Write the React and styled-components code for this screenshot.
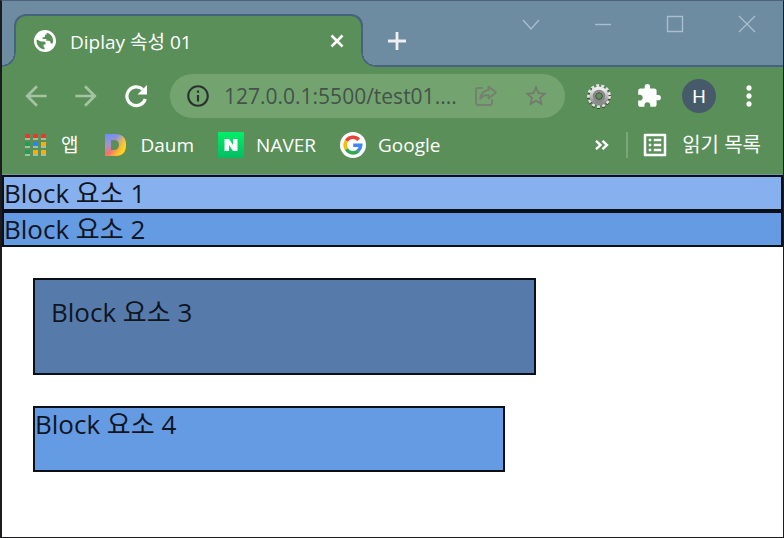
import React from 'react';
import styled, { createGlobalStyle } from 'styled-components';
import {
  MdArrowBack,
  MdArrowForward,
  MdExtension,
  MdInfoOutline,
  MdMoreVert,
  MdOutlineListAlt,
  MdStarBorder,
} from 'react-icons/md';

const GlobalStyle = createGlobalStyle`
  *, *::before, *::after {
    box-sizing: border-box;
  }

  body {
    margin: 0;
    background-color: #fff;
    font-family: 'Open Sans', 'Noto Sans CJK KR', sans-serif;
  }

  button, input {
    margin: 0;
    padding: 0;
    border: 0;
    background: none;
    font: inherit;
    color: inherit;
  }

  svg {
    display: block;
    flex: none;
  }
`;

const BrowserWindow = styled.div`
  min-height: 100vh;
  display: flex;
  flex-direction: column;
  border: 1px solid #1c1c1f;
  border-top-color: #4c6276;
  border-left-width: 2px;
`;

const TabStrip = styled.header`
  height: 66px;
  display: flex;
  align-items: stretch;
  background-color: #6d8ba1;
  box-shadow: inset 0 -2px 0 #46627c;
`;

const Tab = styled.div`
  position: relative;
  flex: 0 1 349px;
  min-width: 0;
  margin: 13px 0 0 12px;
  padding: 0 12px 2px 18px;
  display: flex;
  align-items: center;
  gap: 14px;
  color: #fff;
  font-size: 19px;
  background-color: #5a8f59;
  border: 2px solid #46627c;
  border-bottom: 0;
  border-radius: 12px 12px 0 0;

  /* rounded feet of the tab */
  &::before,
  &::after {
    content: '';
    position: absolute;
    bottom: 0;
    width: 14px;
    height: 14px;
  }

  &::before {
    left: -14px;
    background: radial-gradient(circle at 0 0, #6d8ba1 12px, #46627c 12px, #46627c 13px, #5a8f59 14px);
  }

  &::after {
    right: -14px;
    background: radial-gradient(circle at 100% 0, #6d8ba1 12px, #46627c 12px, #46627c 13px, #5a8f59 14px);
  }
`;

const TabTitle = styled.span`
  flex: 1;
  min-width: 0;
  overflow: hidden;
  white-space: nowrap;
`;

const TabButton = styled.button`
  width: 24px;
  height: 24px;
  display: grid;
  place-items: center;
  color: #fff;
`;

const NewTabButton = styled(TabButton)`
  width: 36px;
  height: 36px;
  margin: 22px 0 0 16px;
  color: #f0f0f0;
`;

const WindowControls = styled.div`
  margin-left: auto;
  display: flex;
  color: #a9bdcd;
`;

const ControlButton = styled.button`
  width: 72px;
  height: 46px;
  display: grid;
  place-items: center;
`;

const Toolbar = styled.nav`
  background-color: #5a8f59;
  color: #fff;
  border-bottom: 1px solid #7793a4;
`;

const NavRow = styled.div`
  height: 58px;
  padding: 0 9px;
  display: flex;
  align-items: center;
`;

const IconButton = styled.button`
  width: 50px;
  height: 44px;
  flex: none;
  display: grid;
  place-items: center;
  color: ${({ $color }) => $color || '#fff'};
`;

const AddressBar = styled.form`
  flex: 1;
  min-width: 0;
  height: 44px;
  margin: 0 9px;
  padding: 0 4px 0 15px;
  display: flex;
  align-items: center;
  background-color: #73a470;
  border-radius: 22px;
  color: #29332d;
`;

const AddressInput = styled.input`
  flex: 1;
  min-width: 0;
  margin-left: 13px;
  font-size: 21px;
  color: #44524a;
  outline: none;
`;

const Avatar = styled.span`
  width: 34px;
  height: 34px;
  display: grid;
  place-items: center;
  border-radius: 50%;
  background-color: #465a69;
  font-family: Roboto, sans-serif;
  font-size: 19px;
`;

const BookmarkRow = styled.div`
  height: 49px;
  padding: 0 22px 9px 21px;
  display: flex;
  align-items: center;
  gap: 24px;
`;

const Bookmark = styled.a`
  display: flex;
  align-items: center;
  gap: 12px;
  color: #fff;
  font-size: 19px;
  line-height: 26px;
  text-decoration: none;
  white-space: nowrap;
`;

const ReadingList = styled(Bookmark)`
  font-size: 20px;
`;

const BookmarkEnd = styled.div`
  margin-left: auto;
  display: flex;
  align-items: center;
  gap: 12px;
`;

const Divider = styled.span`
  width: 2px;
  height: 26px;
  background-color: #7ba67a;
`;

const Page = styled.main`
  flex: 1;
  background-color: #fff;
`;

const Block = styled.div`
  min-height: 36px;
  border: 2px solid #0b0f18;
  background-color: ${({ $color }) => $color};
  font-size: 26px;
  line-height: 32px;
  color: #10151f;
`;

const SizedBlock = styled(Block)`
  width: ${({ $width }) => $width}px;
  max-width: calc(100% - 62px);
  height: ${({ $height }) => $height}px;
  margin: 31px;
  padding: ${({ $padding }) => $padding || 0}px;
`;

const GlobeIcon = () => (
  <svg width="22" height="22" viewBox="0 0 22 22">
    <circle cx="11" cy="11" r="11" fill="#fff" />
    <path
      d="M2.6 9.4 L7 11.6 H10 Q11.6 11.6 11.6 13.2 V14.4 H9.6 V16.4 Q9.6 17.4 10.6 17.6 V19.4 Q5.6 19 3.4 14.8 Q2.2 12 2.6 9.4Z M12.6 2.7 Q16.4 3.4 18.4 7.2 Q19.8 10.6 18.6 13.6 H16.6 V12.4 Q16.4 10.8 14.8 10.8 H12.4 V9 H8.6 V7.2 H10 Q11 7.2 11 6.2 V4.8 H12.6Z"
      fill="#5a8f59"
    />
  </svg>
);

const ReloadIcon = () => (
  <svg width="24" height="24" viewBox="0 0 24 24">
    <path d="M21.3 15 A9.4 9.4 0 1 1 18.8 5.4" fill="none" stroke="currentColor" strokeWidth="3.2" />
    <path d="M23 1 V10.5 H13.5 Z" fill="currentColor" />
  </svg>
);

const ShareIcon = () => (
  <svg width="24" height="24" viewBox="0 0 24 24" fill="none" stroke="currentColor" strokeWidth="2">
    <path d="M8 4 H4 Q2 4 2 6 V19 Q2 21 4 21 H16 Q18 21 18 19 V16" strokeLinecap="round" />
    <path d="M14.5 2.5 L22 8.5 L14.5 14.5 V11 Q9 10.8 6.3 14.8 Q7 7 14.5 6 Z" strokeLinejoin="round" />
  </svg>
);

const GearIcon = () => (
  <svg width="26" height="26" viewBox="0 0 26 26">
    <defs>
      <linearGradient id="gear" x1="0" y1="0" x2="0" y2="1">
        <stop offset="0" stopColor="#ececec" />
        <stop offset="1" stopColor="#8b8b8b" />
      </linearGradient>
    </defs>
    <circle cx="13" cy="14" r="10.4" fill="none" stroke="#33402f" strokeWidth="3" strokeDasharray="2.9 2.2" />
    <circle cx="13" cy="13" r="10.4" fill="none" stroke="#e4e4e4" strokeWidth="3" strokeDasharray="2.9 2.2" />
    <circle cx="13" cy="13" r="6.4" fill="none" stroke="url(#gear)" strokeWidth="6.4" />
    <circle cx="13" cy="13" r="5.2" fill="none" stroke="#858585" strokeWidth="2" />
    <circle cx="13" cy="13" r="3.4" fill="#5a8f59" stroke="#444" strokeWidth="1" />
  </svg>
);

const appDots = [
  ['#f0352d', '#f0352d', '#f0352d'],
  ['#1e9e58', '#2286f5', '#fbac0c'],
  ['#1e9e58', '#fbac0c', '#fbac0c'],
];

const AppsIcon = () => (
  <svg width="26" height="26" viewBox="0 0 26 26">
    {appDots.map((row, y) =>
      row.map((color, x) => (
        <g key={`${x}-${y}`}>
          <rect x={2 + x * 8} y={2 + y * 8} width="5" height="4" fill={color} />
          <rect x={2 + x * 8} y={6 + y * 8} width="5" height="2" fill="#a3bf9f" />
        </g>
      ))
    )}
  </svg>
);

const DaumIcon = () => (
  <svg width="26" height="26" viewBox="0 0 26 26">
    <defs>
      <linearGradient id="daum" x1="0.2" y1="0" x2="0.5" y2="1">
        <stop offset="0" stopColor="#6f8ffb" />
        <stop offset="0.45" stopColor="#a693c9" />
        <stop offset="0.8" stopColor="#f8706a" />
        <stop offset="1" stopColor="#ff8a50" />
      </linearGradient>
      <linearGradient id="daumSide" x1="0" y1="0" x2="1" y2="0.5">
        <stop offset="0.5" stopColor="#ffd21f" stopOpacity="0" />
        <stop offset="0.95" stopColor="#ffd21f" />
      </linearGradient>
    </defs>
    <path d="M3 2 H13 Q24 2 24 13 Q24 24 13 24 H3 Z M9 8 V18 H12 Q17 18 17 13 Q17 8 12 8 Z" fill="url(#daum)" fillRule="evenodd" />
    <path d="M3 2 H13 Q24 2 24 13 Q24 24 13 24 H3 Z M9 8 V18 H12 Q17 18 17 13 Q17 8 12 8 Z" fill="url(#daumSide)" fillRule="evenodd" />
  </svg>
);

const NaverIcon = () => (
  <svg width="26" height="26" viewBox="0 0 26 26">
    <defs>
      <linearGradient id="naver" x1="0" y1="0" x2="0" y2="1">
        <stop offset="0" stopColor="#02ef69" />
        <stop offset="1" stopColor="#04bd63" />
      </linearGradient>
    </defs>
    <rect width="26" height="26" fill="url(#naver)" />
    <path d="M6.5 7 H11 L15 13 V7 H19.5 V19 H15 L11 13 V19 H6.5 Z" fill="#fff" />
  </svg>
);

const GoogleIcon = () => (
  <svg width="26" height="26" viewBox="0 0 26 26">
    <circle cx="13" cy="13" r="13" fill="#fff" />
    <g fill="none" strokeWidth="3.6">
      <path d="M6.4 8.9 A7.7 7.7 0 0 1 18.7 7.8" stroke="#ea4335" />
      <path d="M6.4 17.1 A7.7 7.7 0 0 1 6.4 8.9" stroke="#fbbc05" />
      <path d="M18.2 18.8 A7.7 7.7 0 0 1 6.4 17.1" stroke="#34a853" />
      <path d="M13.2 13.2 H20.7 Q20.5 16.8 18 18.9" stroke="#4285f4" />
    </g>
  </svg>
);

const bookmarks = [
  { name: '앱', icon: <AppsIcon /> },
  { name: 'Daum', icon: <DaumIcon /> },
  { name: 'NAVER', icon: <NaverIcon /> },
  { name: 'Google', icon: <GoogleIcon /> },
];

const windowControls = [
  { name: 'Search tabs', path: 'M0 4 L8 13 L16 4' },
  { name: 'Minimize', path: 'M0 8.5 H16' },
  { name: 'Maximize', path: 'M.5 .5 H15.5 V15.5 H.5 Z' },
  { name: 'Close', path: 'M0 0 L16 16 M16 0 L0 16' },
];

const Tabs = () => (
  <TabStrip>
    <Tab>
      <GlobeIcon />
      <TabTitle>Diplay 속성 01</TabTitle>
      <TabButton type="button" aria-label="Close tab">
        <svg width="14" height="14" viewBox="0 0 14 14" stroke="currentColor" strokeWidth="2.6">
          <path d="M1.5 1.5 L12.5 12.5 M12.5 1.5 L1.5 12.5" />
        </svg>
      </TabButton>
    </Tab>
    <NewTabButton type="button" aria-label="New tab">
      <svg width="20" height="20" viewBox="0 0 20 20" stroke="currentColor" strokeWidth="2.8">
        <path d="M10 1 V19 M1 10 H19" />
      </svg>
    </NewTabButton>
    <WindowControls>
      {windowControls.map(({ name, path }) => (
        <ControlButton key={name} type="button" aria-label={name}>
          <svg width="16" height="16" viewBox="0 0 16 16" fill="none" stroke="currentColor" strokeWidth="1.4" overflow="visible">
            <path d={path} />
          </svg>
        </ControlButton>
      ))}
    </WindowControls>
  </TabStrip>
);

const Navigation = () => (
  <NavRow>
    <IconButton type="button" aria-label="Back" $color="#a5c3a3">
      <MdArrowBack size={32} />
    </IconButton>
    <IconButton type="button" aria-label="Forward" $color="#a5c3a3">
      <MdArrowForward size={32} />
    </IconButton>
    <IconButton type="button" aria-label="Reload">
      <ReloadIcon />
    </IconButton>
    <AddressBar>
      <MdInfoOutline size={26} />
      <AddressInput aria-label="Address" defaultValue="127.0.0.1:5500/test01...." />
      <IconButton type="button" aria-label="Share" $color="#75806f">
        <ShareIcon />
      </IconButton>
      <IconButton type="button" aria-label="Bookmark this page" $color="#75786f">
        <MdStarBorder size={26} />
      </IconButton>
    </AddressBar>
    <IconButton type="button" aria-label="Settings">
      <GearIcon />
    </IconButton>
    <IconButton type="button" aria-label="Extensions">
      <MdExtension size={26} />
    </IconButton>
    <IconButton type="button" aria-label="Profile">
      <Avatar>H</Avatar>
    </IconButton>
    <IconButton type="button" aria-label="Menu">
      <MdMoreVert size={32} />
    </IconButton>
  </NavRow>
);

const Bookmarks = () => (
  <BookmarkRow>
    {bookmarks.map(({ name, icon }) => (
      <Bookmark key={name} href="#">
        {icon}
        {name}
      </Bookmark>
    ))}
    <BookmarkEnd>
      <TabButton type="button" aria-label="More bookmarks">
        <svg width="14" height="10" viewBox="0 0 14 10" fill="none" stroke="currentColor" strokeWidth="2.4">
          <path d="M1 .8 L5.5 5 L1 9.2 M7.5 .8 L12 5 L7.5 9.2" />
        </svg>
      </TabButton>
      <Divider />
      <ReadingList href="#">
        <MdOutlineListAlt size={30} />
        읽기 목록
      </ReadingList>
    </BookmarkEnd>
  </BookmarkRow>
);

const App = () => {
  return (
    <>
      <GlobalStyle />
      <BrowserWindow>
        <Tabs />
        <Toolbar>
          <Navigation />
          <Bookmarks />
        </Toolbar>
        <Page>
          <Block $color="#86b1ee">Block 요소 1</Block>
          <Block $color="#659be3">Block 요소 2</Block>
          <SizedBlock $color="#567bab" $width={503} $height={97} $padding={16}>
            Block 요소 3
          </SizedBlock>
          <SizedBlock $color="#659be3" $width={472} $height={66}>
            Block 요소 4
          </SizedBlock>
        </Page>
      </BrowserWindow>
    </>
  );
};

export default App;
